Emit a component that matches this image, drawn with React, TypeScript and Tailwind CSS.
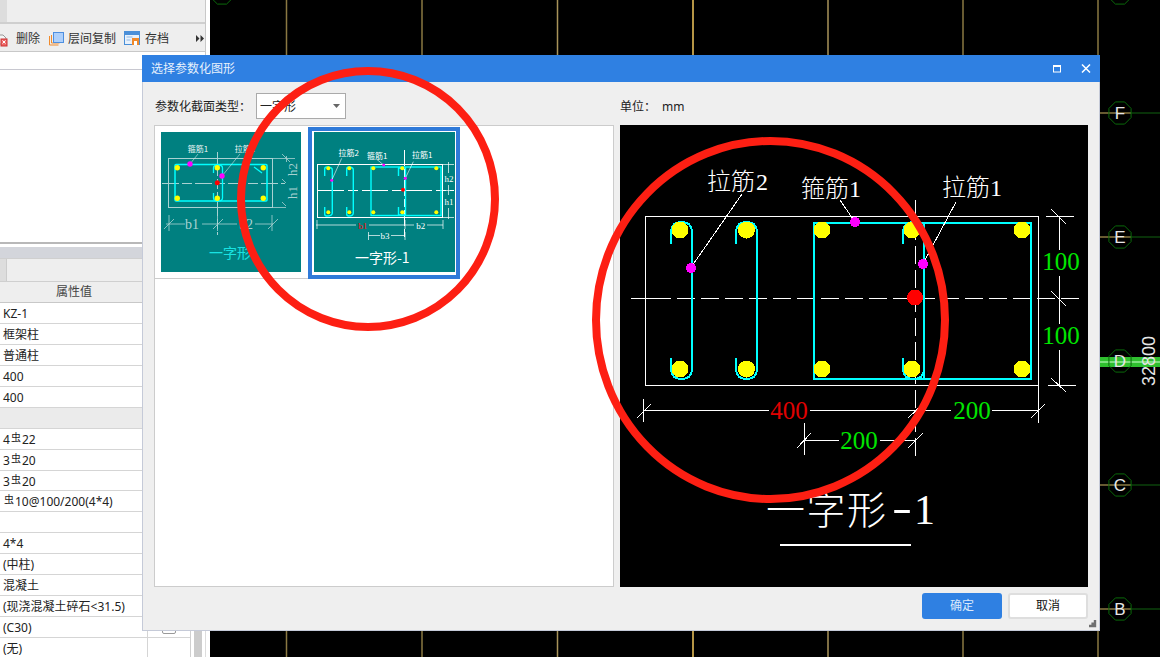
import type { ReactNode } from "react";

const serif = "'Liberation Serif','Noto Sans CJK SC',serif";
const sans = "'Noto Sans CJK SC',sans-serif";

function Steel() {
  return <span className="relative -top-[3px] mx-px text-[10px] leading-none">虫</span>;
}

const rows: { value: ReactNode; shade?: boolean; check?: boolean }[] = [
  { value: "KZ-1" },
  { value: "框架柱" },
  { value: "普通柱" },
  { value: "400" },
  { value: "400" },
  { value: "", shade: true },
  { value: <>4<Steel />22</> },
  { value: <>3<Steel />20</> },
  { value: <>3<Steel />20</> },
  { value: <><Steel />10@100/200(4*4)</> },
  { value: "" },
  { value: "4*4" },
  { value: "(中柱)" },
  { value: "混凝土" },
  { value: "(现浇混凝土碎石<31.5)" },
  { value: "(C30)", check: true },
  { value: "(无)" },
];

function LeftPanel() {
  return (
    <aside className="flex h-full w-[210px] shrink-0 flex-col overflow-hidden bg-white text-xs text-[#333]">
      <div className="w-[206px] border-r border-[#c8c8c8] bg-[#eeeeee]">
        <div className="flex h-[24px] border-b-2 border-[#cfcfcf]">
          <div className="h-full w-[7px] bg-[#dddddd]" />
        </div>
        <div className="flex h-[28px] items-center overflow-hidden whitespace-nowrap border-b border-[#c8c8c8] pt-[2px]">
          <svg className="-ml-[5px] shrink-0" width="17" height="18" viewBox="0 0 17 18">
            <path d="M1 5h7l3 3v6H1z" fill="#f4f4f4" stroke="#999" />
            <rect x="6" y="9" width="6" height="7" fill="#e66" stroke="#c33" />
            <path d="M7.5 10.5l3 3m0-3l-3 3" stroke="#fff" />
          </svg>
          <span className="ml-[4px]">删除</span>
          <svg className="ml-[9px] shrink-0" width="15" height="15" viewBox="0 0 15 15">
            <path d="M.5 5v9h9M2.5 4v8h8" fill="none" stroke="#f08a2c" />
            <rect x="4.5" y="1.5" width="10" height="10" fill="#aed0fb" stroke="#4d8fe0" />
          </svg>
          <span className="ml-[4px]">层间复制</span>
          <svg className="ml-[8px] shrink-0" width="16" height="15" viewBox="0 0 16 15">
            <rect x=".5" y=".5" width="15" height="13" fill="#e8f1fb" stroke="#4a8fd8" />
            <rect x="1" y="1" width="14" height="3" fill="#4a8fd8" />
            <path d="M2.500 6h6M2.500 9h4" stroke="#8fb8e4" />
            <rect x="8" y="7" width="7" height="7" fill="#f08a2c" />
            <rect x="10" y="10" width="3" height="4" fill="#fff" />
          </svg>
          <span className="ml-[5px]">存档</span>
          <svg className="ml-[27px] shrink-0" width="8" height="7" viewBox="0 0 8 7">
            <path d="M0 0l3.500 3.500L0 7zM4.500 0L8 3.500 4.500 7z" fill="#333" />
          </svg>
        </div>
      </div>
      <div className="h-[18px] w-[206px] shrink-0 border-b border-[#c8c8d0] border-r border-r-[#c8c8c8]" />
      <div className="h-[172px] w-[206px] shrink-0 border-r border-[#c8c8c8]" />
      <div className="h-[2px] w-[206px] shrink-0 bg-[#b8b8b8]" />
      <div className="h-[3px] shrink-0" />
      <div className="h-[11px] w-[206px] shrink-0 bg-[#d3d5db]" />
      <div className="flex min-h-0 flex-1">
        <div className="w-[191px] shrink-0 border-r border-[#d0d0d0]">
          <div className="flex h-[24px] border-y border-[#cfcfcf] bg-[#eeeeee]">
            <div className="h-full w-[7px] border-r border-[#cccccc] bg-[#dddddd]" />
          </div>
          <div className="flex h-[21px] w-full border-b border-[#c8c8c8] bg-[#eeeeee]">
            <div className="w-[148px] text-center leading-[20px] text-[#444]">属性值</div>
          </div>
          {rows.map((r, i) => (
            <div
              key={i}
              className={`flex h-[20.94px] border-b border-[#d5d5d5] ${r.shade ? "bg-[#ebebeb]" : "bg-white"}`}
            >
              <div className="w-[148px] truncate border-r border-[#d5d5d5] pl-[3px] leading-[22px] text-[#222]">{r.value}</div>
              <div className="flex flex-1 items-center justify-center">
                {r.check && <div className="h-[13px] w-[14px] rounded-[2px] border border-[#999] bg-white" />}
              </div>
            </div>
          ))}
        </div>
        <div className="ml-[3px] w-[8px] bg-[#cccccc]" />
        <div className="ml-[3px] w-[1px] bg-[#dddddd]" />
      </div>
    </aside>
  );
}

const gridX = [286.5, 422, 557.5, 693, 828, 963, 1098];
const bubbles: [string, number][] = [
  ["F", 113],
  ["E", 237],
  ["D", 361],
  ["C", 485],
  ["B", 609],
];

function octagon(cx: number, cy: number, r: number) {
  return Array.from({ length: 8 }, (_, i) => {
    const a = (i * Math.PI) / 4 + Math.PI / 8;
    return `${cx + r * Math.cos(a)},${cy + r * Math.sin(a)}`;
  }).join(" ");
}

function CadCanvas() {
  return (
    <svg className="block h-full flex-1" viewBox="210 0 950 657" style={{ background: "#000" }}>
      {gridX.map((x) => (
        <line
          key={x}
          x1={x}
          x2={x}
          y1="0"
          y2="657"
          stroke={x === 693 ? "#f2c75c" : x === 557.5 || x === 828 ? "#a8935a" : "#8a7842"}
          strokeWidth="1.500"
        />
      ))}
      <polygon points={octagon(222, -7, 12)} fill="none" stroke="#0a6a0a" />
      <polygon points={octagon(1120, -7, 12)} fill="none" stroke="#0a6a0a" />
      {bubbles.map(([label, y]) => (
        <g key={label}>
          {label === "D" ? (
            <>
              <rect x="1100" y={y - 4} width="60" height="10" fill="#2fbf2f" />
              <rect x="1100" y={y} width="60" height="2" fill="#7fe07f" />
            </>
          ) : (
            <>
              <line x1="1100" x2="1131" y1={y} y2={y} stroke="#8a7842" strokeWidth="1.500" />
              <line x1="1131" x2="1160" y1={y} y2={y} stroke="#0b420b" strokeWidth="1.500" />
            </>
          )}
          <polygon points={octagon(1120, y, 12)} fill="none" stroke="#0a6a0a" />
          <text
            x="1120"
            y={y + 6}
            textAnchor="middle"
            fontSize="17"
            fontFamily="'Liberation Sans',sans-serif"
            fill="#e6e6e6"
          >
            {label}
          </text>
        </g>
      ))}
      <text
        transform="translate(1155 386) rotate(-90)"
        fontSize="18"
        fontFamily="'Liberation Sans',sans-serif"
        fill="#e6e6e6"
      >
        32800
      </text>
    </svg>
  );
}

function Thumb1() {
  const c = "#a9d2d2";
  return (
    <svg className="block h-[140px] w-[140px] bg-[#008080]" viewBox="0 0 140 140">
      <rect x="7.500" y="26.500" width="104" height="49" fill="none" stroke={c} />
      <line x1="1" x2="124" y1="51.500" y2="51.500" stroke={c} strokeDasharray="17 3 10 3" />
      <line x1="56.500" x2="56.500" y1="20" y2="103" stroke={c} strokeDasharray="24 3 10 3" />
      <rect x="14" y="32.500" width="92" height="36.500" rx="1" fill="none" stroke="#00ffff" strokeWidth="1.500" />
      <path d="M52.500 41V36Q52.500 33 57 33Q61.500 33 61.500 36V66Q61.500 69 57 69Q52.500 69 52.500 66V61" fill="none" stroke="#00ffff" strokeWidth="1.300" />
      <path d="M93 35l8 6" stroke="#00ffff" strokeWidth="1.300" />
      {[16.3, 56.3, 102.3].map((x) => (
        <g key={x}>
          <circle cx={x} cy="35.700" r="2.700" fill="#ffff00" />
          <circle cx={x} cy="66.300" r="2.700" fill="#ffff00" />
        </g>
      ))}
      <path d="M29 32l8-10M61 44l18-22" stroke="#cfe8e8" strokeWidth=".6" />
      <circle cx="29" cy="32" r="2.700" fill="#ff00ff" />
      <circle cx="61" cy="44" r="2.700" fill="#ff00ff" />
      <circle cx="56.300" cy="50.700" r="2.500" fill="#ff0000" />
      <text x="37" y="20" fontSize="8" textAnchor="middle" fill="#e8f4f4" fontFamily={sans}>箍筋1</text>
      <text x="84" y="20" fontSize="8" textAnchor="middle" fill="#e8f4f4" fontFamily={sans}>拉筋1</text>
      <path d="M5 92H24M41 92H76M94 92H112M8 83V99M56.500 83V99M111 83V99M3 97l10-10M52 97l10-10M107 97l10-10" stroke={c} strokeWidth=".8" fill="none" />
      <text x="31" y="97" fontSize="14" textAnchor="middle" fill={c} fontFamily={serif}>b1</text>
      <text x="85" y="97" fontSize="14" textAnchor="middle" fill={c} fontFamily={serif}>b2</text>
      <path d="M112 26.500H134M112 75.500H134M125.500 24V78M121 22l10 10M121 47l10 10M121 70l10 10" stroke={c} strokeWidth=".8" fill="none" />
      <rect x="125" y="30" width="13" height="50" fill="#008080" />
      <text transform="translate(136 44) rotate(-90)" fontSize="13" fill={c} fontFamily={serif}>h2</text>
      <text transform="translate(136 67) rotate(-90)" fontSize="13" fill={c} fontFamily={serif}>h1</text>
      <text x="69" y="126" fontSize="14" textAnchor="middle" fill="#19e2e2" fontFamily={sans}>一字形</text>
    </svg>
  );
}

function Thumb2() {
  const tie = (a: number, b: number) =>
    `M${a} 44V37Q${a} 35 ${a + 2} 35Q${b} 35 ${b} 38V81Q${b} 84 ${a + 2} 84Q${a} 84 ${a} 82V75`;
  return (
    <svg className="block h-[140px] w-[141px] bg-[#008080]" viewBox="0 0 141 140">
      <rect x="3.500" y="32.500" width="125" height="53" fill="none" stroke="#fff" />
      <line x1="4" x2="140" y1="58.500" y2="58.500" stroke="#fff" strokeDasharray="26 4 10 4" />
      <line x1="90.500" x2="90.500" y1="18" y2="108" stroke="#fff" strokeDasharray="16 3 8 3" />
      <rect x="57" y="35" width="70" height="48.500" fill="none" stroke="#00ffff" strokeWidth="1.400" />
      <path d="M91.500 35V83" stroke="#00ffff" strokeWidth="1.400" />
      <path d={tie(10.7, 18.3)} fill="none" stroke="#00ffff" strokeWidth="1.400" />
      <path d={tie(32.7, 39.3)} fill="none" stroke="#00ffff" strokeWidth="1.400" />
      <path d="M84.500 44V36H91M84.500 75V83H91" fill="none" stroke="#00ffff" strokeWidth="1.400" />
      {[14.3, 35.3, 59.3, 88.3, 122.3].map((x) => (
        <g key={x}>
          <circle cx={x} cy="36.300" r="2" fill="#ffff00" />
          <circle cx={x} cy="80.300" r="2" fill="#ffff00" />
        </g>
      ))}
      <path d="M27.700 26.300L17.700 48.300M62.700 27.300L69.700 33M99.300 29.700L91.300 46.300" stroke="#fff" strokeWidth=".6" />
      <circle cx="17.700" cy="48.300" r="1.500" fill="#ff00ff" />
      <circle cx="69.700" cy="33" r="1.500" fill="#ff00ff" />
      <circle cx="91.300" cy="46.300" r="1.500" fill="#ff00ff" />
      <circle cx="89" cy="57.700" r="2" fill="#ff0000" />
      <text x="34.700" y="24" fontSize="8" textAnchor="middle" fill="#fff" fontFamily={sans}>拉筋2</text>
      <text x="63.300" y="27" fontSize="8" textAnchor="middle" fill="#fff" fontFamily={sans}>箍筋1</text>
      <text x="108.300" y="26" fontSize="8" textAnchor="middle" fill="#fff" fontFamily={sans}>拉筋1</text>
      <path d="M134.500 30V41M134.500 53V63M134.500 76V87M129 32.500H140M129 58.500H140M129 85.500H140" stroke="#fff" strokeWidth=".7" />
      <text x="135" y="50" fontSize="9" textAnchor="middle" fill="#fff" fontFamily={serif}>h2</text>
      <text x="135" y="73" fontSize="9" textAnchor="middle" fill="#fff" fontFamily={serif}>h1</text>
      <path d="M2 93H42M55 93H100M113 93H129M3 88V97M91 88V97M129 88V97" stroke="#fff" strokeWidth=".7" />
      <text x="48.700" y="97" fontSize="9" textAnchor="middle" fill="#ff0000" fontFamily={serif}>b1</text>
      <text x="106.700" y="97" fontSize="9" textAnchor="middle" fill="#fff" fontFamily={serif}>b2</text>
      <path d="M54.500 103.500H66M77 103.500H91M54.500 100V108M91 100V108" stroke="#fff" strokeWidth=".7" />
      <text x="71" y="107" fontSize="9" textAnchor="middle" fill="#fff" fontFamily={serif}>b3</text>
      <text x="68.300" y="131" fontSize="14" textAnchor="middle" fill="#fff" fontFamily={sans}>一字形-1</text>
    </svg>
  );
}

function BigTie({ a, b }: { a: number; b: number }) {
  const m = (a + b) / 2;
  return (
    <path
      d={`M${a} 244V233Q${a} 222 ${m} 222Q${b} 222 ${b} 233V368Q${b} 379 ${m} 379Q${a} 379 ${a} 368V358`}
      fill="none"
      stroke="#00ffff"
      strokeWidth="2"
    />
  );
}

function BigDrawing() {
  const dims = [
    "M1059.500 216V250M1059.500 276V324M1059.500 350V385",
    "M1046 216.500H1074M1048 385.500H1076",
    "M1051 209L1066 224M1051 291L1066 306M1051 378L1066 392",
    "M643 410.500H769M810 410.500H951M992 410.500H1038",
    "M643.500 399V422M1038.500 385V423",
    "M637 418L651 404M908 418L923 404M1031 418L1045 404",
    "M804 440.500H839M880 440.500H915",
    "M804.500 423V455M797 448L811 433M908 448L923 433",
  ];
  return (
    <svg className="block h-[462px] w-[468px] bg-black" viewBox="620 125 468 462" shapeRendering="crispEdges">
      <rect x="645.500" y="216.500" width="393" height="169" fill="none" stroke="#fff" />
      <path d="M631 298.500H671" stroke="#fff" />
      <line x1="677" x2="1079" y1="298.500" y2="298.500" stroke="#fff" strokeDasharray="18 6" />
      <path d="M915.500 200V240" stroke="#fff" />
      <line x1="915.500" x2="915.500" y1="246" y2="458" stroke="#fff" strokeDasharray="18 6" />
      <rect x="814" y="223" width="217" height="156" fill="none" stroke="#00ffff" strokeWidth="2" />
      <path d="M924 223V379" stroke="#00ffff" strokeWidth="2" />
      <BigTie a={671} b={692} />
      <BigTie a={736} b={757} />
      <BigTie a={903} b={924} />
      {[680, 746.5, 822, 912, 1022].map((x) => (
        <g key={x}>
          <circle cx={x} cy="230" r="8.500" fill="#ffff00" />
          <circle cx={x} cy="369" r="8.500" fill="#ffff00" />
        </g>
      ))}
      <path d="M742 194L692 266M840 200L855 222M956 202L924 262" stroke="#fff" />
      <circle cx="691" cy="268" r="5" fill="#ff00ff" />
      <circle cx="855" cy="222" r="5" fill="#ff00ff" />
      <circle cx="923" cy="264" r="5" fill="#ff00ff" />
      <circle cx="915" cy="297.500" r="8" fill="#ff0000" />
      {dims.map((d) => (
        <path key={d} d={d} stroke="#fff" fill="none" />
      ))}
      <g fontFamily={serif} fontSize="24" fill="#fff" fontWeight="300">
        <text x="707" y="190">拉筋<tspan dx="1">2</tspan></text>
        <text x="801" y="197">箍筋1</text>
        <text x="942" y="196">拉筋1</text>
      </g>
      <g fontFamily={serif} fontSize="25" textAnchor="middle">
        <text x="1061" y="269.500" fill="#00e600">100</text>
        <text x="1061" y="343.500" fill="#00e600">100</text>
        <text x="789" y="418.500" fill="#e00000">400</text>
        <text x="972" y="418.500" fill="#00e600">200</text>
        <text x="859" y="449" fill="#00e600">200</text>
      </g>
      <g fontFamily={serif} fill="#fff" fontWeight="300">
        <text x="766" y="524" fontSize="39" letterSpacing="1.500">一字形</text>
        <text transform="translate(892 521) scale(1.5 1)" fontSize="40">-</text>
        <text x="914" y="524" fontSize="42">1</text>
      </g>
      <rect x="780" y="544" width="131" height="2" fill="#fff" />
    </svg>
  );
}

function Dialog() {
  return (
    <section className="absolute left-[142px] top-[55px] flex h-[576px] w-[958px] flex-col text-xs">
      <header className="flex h-[27px] shrink-0 items-center bg-[#2f80e2] pl-[9px] text-[#e6f0fc]">
        <span>选择参数化图形</span>
        <svg className="ml-auto" width="9" height="8" viewBox="0 0 9 8">
          <rect x=".5" y=".5" width="7" height="6.500" fill="none" stroke="#fff" />
          <rect x="0" y="0" width="8" height="2" fill="#fff" />
        </svg>
        <svg className="ml-[19px] mr-[9px]" width="10" height="9" viewBox="0 0 10 9">
          <path d="M1 .5l8 8m0-8l-8 8" stroke="#fff" strokeWidth="1.500" />
        </svg>
      </header>
      <div className="relative min-h-0 flex-1 border-x border-b border-[#c5cad8] bg-[#efefef] pl-[11px] text-[#222]">
        <div className="mt-[11px] flex h-[26px] items-center">
          <div className="flex w-[466px] items-center">
            <span className="ml-px w-[101px] whitespace-nowrap pt-px">参数化截面类型：</span>
            <div className="flex h-[26px] w-[90px] items-center justify-between border border-[#aaaaaa] bg-white pl-[3px] pr-[5px]">
              <span className="pt-px">一字形</span>
              <svg width="7" height="4" viewBox="0 0 7 4">
                <path d="M0 0h7L3.500 4z" fill="#666" />
              </svg>
            </div>
          </div>
          <span className="pt-px">单位：</span>
          <span className="ml-[6px] pt-px">mm</span>
        </div>
        <div className="mt-[6px] flex h-[462px] gap-[6px]">
          <div className="flex h-full w-[460px] items-start border border-[#cccccc] bg-white">
            <div className="h-[153px] w-[153px] border-b border-[#cccccc] pl-[6px] pt-[6px]">
              <Thumb1 />
            </div>
            <div className="mt-px h-[152px] w-[152px] border-4 border-[#2f7ad9] pl-[2px] pt-px">
              <Thumb2 />
            </div>
          </div>
          <BigDrawing />
        </div>
        <div className="mt-[6px] flex w-[934px] justify-end gap-[6px]">
          <button className="h-[26px] w-[80px] rounded-[3px] bg-[#2f80e2] text-[#dbe9fb]">确定</button>
          <button className="h-[26px] w-[80px] rounded-[3px] border-2 border-[#dedede] bg-white text-[#111]">取消</button>
        </div>
        <svg className="absolute bottom-[2px] right-[2px]" width="9" height="9" viewBox="0 0 9 9">
          <path d="M6 0h3v3H6zM3 3h3v3H3zM6 3h3v3H6zM0 6h3v3H0zM3 6h3v3H3zM6 6h3v3H6z" fill="#707070" transform="translate(1 1) scale(.8)" />
        </svg>
      </div>
    </section>
  );
}

export default function App() {
  return (
    <div className="relative flex h-[657px] w-[1160px] overflow-hidden bg-black font-['Noto_Sans','Noto_Sans_CJK_SC',sans-serif]">
      <LeftPanel />
      <CadCanvas />
      <Dialog />
      {/* 手绘红圈 */}
      <svg className="pointer-events-none absolute inset-0" width="1160" height="657" viewBox="0 0 1160 657">
        <ellipse cx="368" cy="199" rx="127" ry="128" fill="none" stroke="#fd1f13" strokeWidth="8" />
        <ellipse cx="770.500" cy="320" rx="174.500" ry="179" fill="none" stroke="#fd1f13" strokeWidth="8" />
      </svg>
    </div>
  );
}
